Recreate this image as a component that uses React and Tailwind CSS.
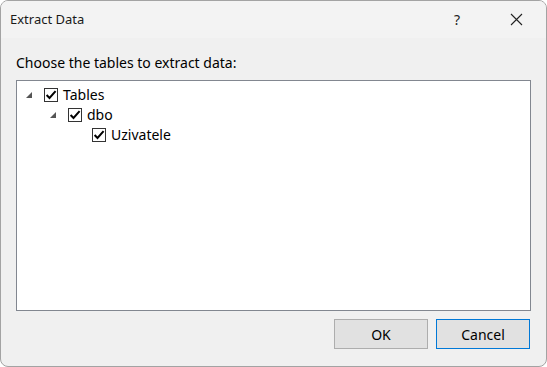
import React from "react";

function Check() {
  return (
    <span className="flex h-[14px] w-[14px] items-center justify-center border border-[#333] bg-white">
      <svg width="12" height="12" viewBox="0 0 12 12">
        <path d="M1.6 6 L4.5 9 L10.6 2.2" fill="none" stroke="#000" strokeWidth="2" />
      </svg>
    </span>
  );
}

function Tri() {
  return (
    <span className="flex h-[14px] w-[14px] items-center justify-center">
      <svg width="8" height="8" viewBox="0 0 8 8">
        <path d="M7 1 L7 7 L1 7 Z" fill="#555" />
      </svg>
    </span>
  );
}

function Row({ indent, expander, label }) {
  return (
    <div className="flex h-[20px] items-center" style={{ paddingLeft: indent }}>
      {expander ? <Tri /> : <span className="w-[14px]" />}
      <span className="ml-[8px]"><Check /></span>
      <span className="ml-[5px] text-[14px] leading-none text-black">{label}</span>
    </div>
  );
}

export default function App() {
  return (
    <div className="h-[367px] w-[547px] bg-white" style={{ fontFamily: '"Noto Sans", "Open Sans", sans-serif' }}>
      <div className="flex h-full w-full flex-col overflow-hidden rounded-[8px] border border-[#a3a3a3] bg-[#f0f0f0]">
        <div className="flex h-[37px] shrink-0 items-center bg-[#f3f3f3]">
          <span className="ml-[9px] text-[13px] text-[#1a1a1a]">Extract Data</span>
          <span className="ml-auto mr-[49px] text-[14px] text-[#222]">?</span>
          <span className="mr-[23px] flex h-[14px] w-[14px] items-center justify-center">
            <svg width="13" height="13" viewBox="0 0 13 13">
              <path d="M1 1 L12 12 M12 1 L1 12" stroke="#222" strokeWidth="1.1" />
            </svg>
          </span>
        </div>
        <div className="flex flex-1 flex-col px-[15px]">
          <div className="mt-[15px] text-[14px] leading-[20px] text-black">Choose the tables to extract data:</div>
          <div className="mt-[7px] h-[231px] border border-[#828790] bg-white pt-[4px]">
            <Row indent={5} expander label="Tables" />
            <Row indent={29} expander label="dbo" />
            <Row indent={53} label="Uzivatele" />
          </div>
          <div className="mt-[8px] flex justify-end gap-[8px] pr-[1px]">
            <button className="h-[30px] w-[94px] border border-[#adadad] bg-[#e1e1e1] text-[14px] text-black">OK</button>
            <button className="h-[30px] w-[94px] border border-[#0078d7] bg-[#e1e1e1] text-[14px] text-black">Cancel</button>
          </div>
        </div>
      </div>
    </div>
  );
}
